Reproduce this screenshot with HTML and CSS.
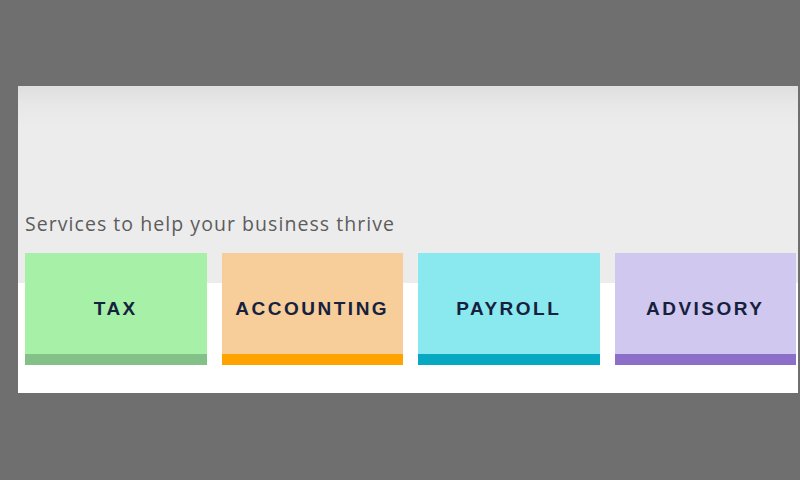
FILE: index.html
```html
<!DOCTYPE html>
<html>
<head>
<meta charset="utf-8">
<link rel="stylesheet" href="styles.css">
</head>
<body>
<div class="panel">
  <h2 class="heading">Services to help your business thrive</h2>
  <div class="cards">
    <div class="card tax"><span>TAX</span></div>
    <div class="card accounting"><span>ACCOUNTING</span></div>
    <div class="card payroll"><span>PAYROLL</span></div>
    <div class="card advisory"><span>ADVISORY</span></div>
  </div>
</div>
</body>
</html>
```

FILE: styles.css
```css
html, body {
  margin: 0;
  padding: 0;
}
body {
  background: #6f6f6f;
  width: 800px;
  height: 480px;
  overflow: hidden;
  padding-top: 86px;
  box-sizing: border-box;
}
.panel {
  margin-left: 18px;
  width: 780px;
  height: 307px;
  box-sizing: border-box;
  padding: 0 0 0 7px;
  background:
    linear-gradient(to bottom, #dedede 0px, #e8e8e8 20px, #ececec 40px, #ececec 197px, #ffffff 197px);
  display: flex;
  flex-direction: column;
}
.heading {
  margin: 125px 0 0 0;
  font-family: "Open Sans", sans-serif;
  font-weight: 400;
  font-size: 19.5px;
  line-height: 26px;
  letter-spacing: 1.05px;
  color: #5c5c5c;
}
.cards {
  margin-top: 16px;
  width: 771px;
  display: grid;
  grid-template-columns: repeat(4, 1fr);
  column-gap: 15px;
}
.card {
  height: 112px;
  display: flex;
  align-items: center;
  justify-content: center;
  padding-top: 11px;
  box-sizing: border-box;
  border-bottom: 11px solid;
  font-family: "Liberation Sans", Arial, sans-serif;
  font-weight: 700;
  font-size: 19px;
  letter-spacing: 2.5px;
  color: #16213e;
}
.tax { background: #a6f0a8; border-color: #84c188; }
.accounting { background: #f7cd9a; border-color: #ffa300; }
.payroll { background: #8ae8ef; border-color: #07a8c2; }
.advisory { background: #d0c8ee; border-color: #8c6fc8; }
```
